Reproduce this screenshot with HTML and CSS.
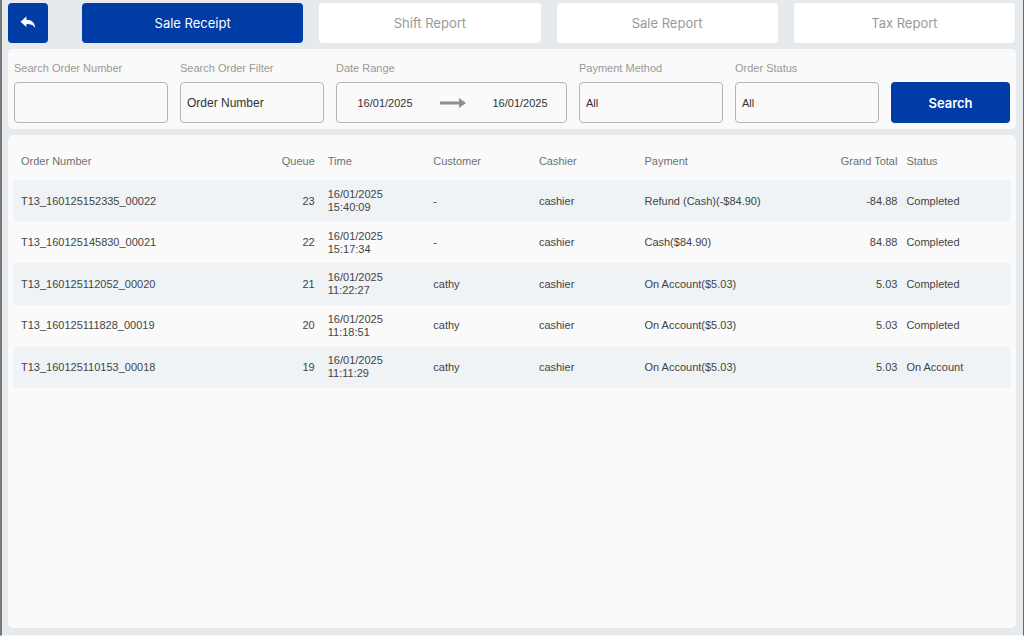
FILE: index.html
```html
<!DOCTYPE html>
<html lang="en">
<head>
<meta charset="utf-8">
<title>Sale Receipt</title>
<link rel="stylesheet" href="styles.css">
</head>
<body>
<div class="app">
  <header class="topbar">
    <button class="back" type="button" aria-label="Back">
      <svg width="16" height="14" viewBox="0 0 16 14"><path fill="#fff" d="M6.4.6v3.1c4.800.2 8.300 2.200 8.900 8.300-1.800-3.200-4.500-4.200-8.900-4.100v3.200L.5 5.800z"/></svg>
    </button>
    <nav class="tabs">
      <button class="tab active" type="button">Sale Receipt</button>
      <button class="tab" type="button">Shift Report</button>
      <button class="tab" type="button">Sale Report</button>
      <button class="tab" type="button">Tax Report</button>
    </nav>
  </header>

  <form class="panel filters">
    <div class="field">
      <label for="number">Search Order Number</label>
      <input class="box" id="number" type="text">
    </div>
    <div class="field">
      <label for="filter">Search Order Filter</label>
      <select class="box large" id="filter"><option>Order Number</option></select>
    </div>
    <div class="field">
      <label for="from">Date Range</label>
      <div class="box range">
        <input class="date" id="from" type="text" value="16/01/2025">
        <svg class="arrow" width="26" height="12" viewBox="0 0 26 12"><path fill="#8e8e8e" d="M0 4.500h19V1l7 5-7 5V7.500H0z"/></svg>
        <input class="date" type="text" value="16/01/2025" aria-label="End date">
      </div>
    </div>
    <div class="field">
      <label for="method">Payment Method</label>
      <select class="box" id="method"><option>All</option></select>
    </div>
    <div class="field">
      <label for="status">Order Status</label>
      <select class="box" id="status"><option>All</option></select>
    </div>
    <button class="search" type="button">Search</button>
  </form>

  <main class="panel results">
    <table>
      <colgroup>
        <col class="c-order"><col class="c-queue"><col class="c-mid"><col class="c-mid"><col class="c-mid"><col class="c-pay"><col class="c-total"><col>
      </colgroup>
      <thead>
        <tr><th>Order Number</th><th class="queue">Queue</th><th>Time</th><th>Customer</th><th>Cashier</th><th>Payment</th><th class="total">Grand Total</th><th>Status</th></tr>
      </thead>
      <tbody>
        <tr><td>T13_160125152335_00022</td><td class="queue">23</td><td>16/01/2025<br>15:40:09</td><td>-</td><td>cashier</td><td>Refund (Cash)(-$84.90)</td><td class="total">-84.88</td><td>Completed</td></tr>
        <tr><td>T13_160125145830_00021</td><td class="queue">22</td><td>16/01/2025<br>15:17:34</td><td>-</td><td>cashier</td><td>Cash($84.90)</td><td class="total">84.88</td><td>Completed</td></tr>
        <tr><td>T13_160125112052_00020</td><td class="queue">21</td><td>16/01/2025<br>11:22:27</td><td>cathy</td><td>cashier</td><td>On Account($5.03)</td><td class="total">5.03</td><td>Completed</td></tr>
        <tr><td>T13_160125111828_00019</td><td class="queue">20</td><td>16/01/2025<br>11:18:51</td><td>cathy</td><td>cashier</td><td>On Account($5.03)</td><td class="total">5.03</td><td>Completed</td></tr>
        <tr><td>T13_160125110153_00018</td><td class="queue">19</td><td>16/01/2025<br>11:11:29</td><td>cathy</td><td>cashier</td><td>On Account($5.03)</td><td class="total">5.03</td><td>On Account</td></tr>
      </tbody>
    </table>
  </main>
</div>
</body>
</html>
```
FILE: styles.css
```css
* { box-sizing: border-box; }
body {
  margin: 0;
  font-family: "Liberation Sans", Arial, sans-serif;
  font-size: 11px;
  color: #444;
}
button, input, select { font: inherit; color: inherit; margin: 0; border: 0; }
.app {
  min-height: 100vh;
  display: flex;
  flex-direction: column;
  gap: 6px;
  padding: 3px 7px 7px 6px;
  background: #e6eaed;
  border-left: 2px solid #77797c;
  border-right: 1px solid #66686a;
  border-bottom: 1px solid #f4f6f7;
}
.topbar { display: flex; gap: 34px; padding-right: 1px; }
.back {
  display: flex;
  align-items: center;
  justify-content: center;
  width: 40px;
  height: 40px;
  padding: 0;
  border-radius: 4px;
  background: #003ca6;
}
.tabs { flex: 1; display: grid; grid-template-columns: repeat(4, 1fr); gap: 16px; }
.tab {
  height: 40px;
  border-radius: 4px;
  background: #fff;
  color: #999;
  font-family: Inter, sans-serif;
  font-size: 13px;
}
.tab.active { background: #003ca6; color: #fff; }
.panel { background: #fafafa; border-radius: 5px; }
.filters {
  display: grid;
  grid-template-columns: 154fr 144fr 231fr 144fr 144fr 119fr;
  gap: 12px;
  align-items: end;
  padding: 12px 6px 6px;
}
.field { display: flex; flex-direction: column; gap: 7px; min-width: 0; }
.field label { line-height: 14px; color: #999; white-space: nowrap; }
.box {
  width: 100%;
  height: 41px;
  padding: 0 6px;
  border: 1px solid #b5b5b5;
  border-radius: 4px;
  background: #fafafa;
  color: #333;
  appearance: none;
}
.large { font-size: 12px; }
.range { display: flex; align-items: center; justify-content: space-between; padding: 0 14px 0 16px; }
.date { width: 64px; padding: 0; background: none; text-align: center; }
.arrow { flex: none; }
.search {
  height: 41px;
  border-radius: 4px;
  background: #003ca6;
  color: #fff;
  font-family: Inter, sans-serif;
  font-size: 13px;
  font-weight: 600;
}
.results { flex: 1; padding: 6px; }
table { width: 100%; table-layout: fixed; border-collapse: collapse; }
th, td { padding: 0 0 0 7px; text-align: left; font-weight: 400; white-space: nowrap; }
th { height: 39px; color: #707070; }
td { height: 41px; line-height: 13px; }
tbody tr:nth-child(odd) { background: #eff3f6; }
tbody tr:nth-child(odd) td { height: 42px; }
.queue, .total { text-align: right; }
th.queue, td.queue { padding-right: 6px; }
th.total, td.total { padding-right: 2px; }
.c-order { width: 20%; }
.c-queue { width: 10.8%; }
.c-mid { width: 10.6%; }
.c-pay { width: 15%; }
.c-total { width: 11.3%; }
```
